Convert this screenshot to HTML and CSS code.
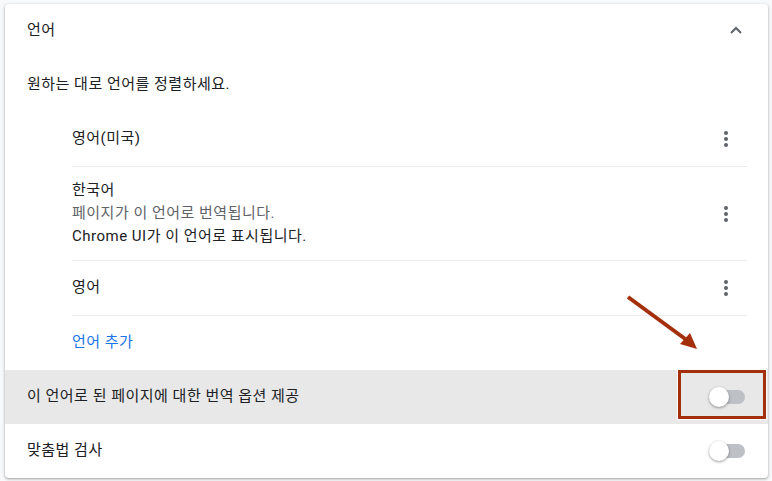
FILE: index.html
```html
<!DOCTYPE html>
<html lang="ko">
<head>
<meta charset="utf-8">
<link rel="stylesheet" href="styles.css">
</head>
<body>
<div class="card">
  <div class="row header">
    <span class="label">언어</span>
    <span class="chev"><svg width="12" height="8" viewBox="0 0 12 8"><path d="M1 7 L6 2 L11 7" fill="none" stroke="#5f6368" stroke-width="2"/></svg></span>
  </div>
  <div class="row desc"><span class="label">원하는 대로 언어를 정렬하세요.</span></div>
  <div class="list">
    <div class="item">
      <div class="item-text"><div>영어(미국)</div></div>
      <span class="kebab"><i></i><i></i><i></i></span>
    </div>
    <div class="item tall">
      <div class="item-text">
        <div>한국어</div>
        <div class="sub">페이지가 이 언어로 번역됩니다.</div>
        <div>Chrome UI가 이 언어로 표시됩니다.</div>
      </div>
      <span class="kebab"><i></i><i></i><i></i></span>
    </div>
    <div class="item">
      <div class="item-text"><div>영어</div></div>
      <span class="kebab"><i></i><i></i><i></i></span>
    </div>
    <div class="item add"><span class="link">언어 추가</span></div>
  </div>
  <div class="row toggle-row hl">
    <span class="label">이 언어로 된 페이지에 대한 번역 옵션 제공</span>
    <span class="toggle"><span class="track"></span><span class="knob"></span></span>
  </div>
  <div class="row toggle-row">
    <span class="label">맞춤법 검사</span>
    <span class="toggle"><span class="track"></span><span class="knob"></span></span>
  </div>
</div>
<div class="callout"></div>
<svg class="arrow" width="772" height="481" viewBox="0 0 772 481">
  <line x1="628" y1="297" x2="688" y2="341" stroke="#a3300b" stroke-width="4"/>
  <path d="M697 349 L680 344 L690 333 Z" fill="#a3300b"/>
</svg>
</body>
</html>
```
FILE: styles.css
```css
html, body {
  margin: 0;
  padding: 0;
}
body {
  background: #f8f9fa;
  font-family: Roboto, "Noto Sans CJK KR", sans-serif;
  font-size: 15px;
  letter-spacing: 0.5px;
  color: #202124;
  width: 772px;
  height: 481px;
  position: relative;
  overflow: hidden;
}
.card {
  position: absolute;
  left: 5px;
  top: 4px;
  width: 763px;
  height: 474px;
  background: #fff;
  border-radius: 4px;
  box-shadow: 0 1px 2px rgba(60,64,67,0.3), 0 1px 3px 1px rgba(60,64,67,0.15);
  overflow: hidden;
  display: flex;
  flex-direction: column;
}
.label, .item-text, .link {
  line-height: 20px;
}
.row {
  display: flex;
  align-items: center;
  justify-content: space-between;
  box-sizing: border-box;
  height: 54px;
  padding: 0 22px 3px 22px;
  flex: none;
}
.toggle-row {
  padding-bottom: 0;
}
.toggle-row .label {
  margin-bottom: 3px;
}
.chev {
  display: flex;
  width: 20px;
  justify-content: center;
  margin-right: 0;
  margin-top: 1px;
}
.list {
  padding: 0 21px 0 67px;
  display: flex;
  flex-direction: column;
}
.item {
  display: flex;
  align-items: center;
  justify-content: space-between;
  box-sizing: border-box;
  height: 55px;
  border-bottom: 1px solid #ebebeb;
}
.item-text {
  margin-bottom: 3px;
}
.item.tall {
  height: 94px;
}
.item.tall .item-text {
  line-height: 23px;
  margin-bottom: 0;
}
.item.add {
  border-bottom: none;
  height: 54px;
}
.item.add .link {
  margin-bottom: 2px;
}
.sub {
  color: #5f6368;
}
.link {
  color: #1a73e8;
}
.kebab {
  width: 20px;
  display: flex;
  flex-direction: column;
  align-items: center;
  gap: 2px;
  margin-right: 11px;
}
.kebab i {
  width: 4px;
  height: 4px;
  border-radius: 50%;
  background: #5f6368;
}
.hl {
  background: #e8e8e8;
}
.toggle {
  position: relative;
  width: 36px;
  height: 20px;
  margin-right: 1px;
}
.track {
  position: absolute;
  left: 2px;
  top: 3px;
  width: 34px;
  height: 14px;
  border-radius: 7px;
  background: #bdc1c6;
}
.knob {
  position: absolute;
  left: 0;
  top: 0;
  width: 20px;
  height: 20px;
  border-radius: 50%;
  background: #fff;
  box-shadow: 0 1px 3px rgba(0,0,0,0.4);
}
.callout {
  position: absolute;
  left: 678px;
  top: 370px;
  width: 82px;
  height: 43px;
  border: 3px solid #a3300b;
  box-shadow: 0 0 0 1px #fff;
}
.arrow {
  position: absolute;
  left: 0;
  top: 0;
}
```
